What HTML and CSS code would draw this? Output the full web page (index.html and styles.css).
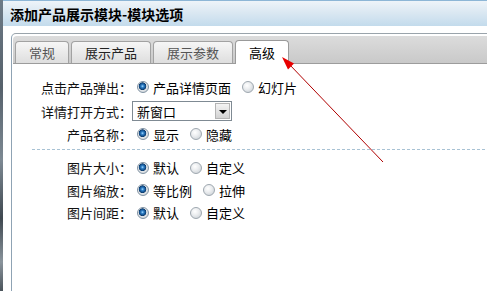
FILE: index.html
```html
<!DOCTYPE html>
<html lang="zh-CN">
<head>
<meta charset="utf-8">
<title>添加产品展示模块-模块选项</title>
<link rel="stylesheet" href="styles.css">
</head>
<body>
<div class="desk"></div>
<div class="win">
  <div class="titlebar"><h1 class="title">添加产品展示模块-模块选项</h1></div>
  <div class="panel">
    <div class="tabbar">
      <div class="tab">常规</div>
      <div class="tab tab-dark">展示产品</div>
      <div class="tab">展示参数</div>
      <div class="tab active">高级</div>
    </div>
    <div class="content">
      <div class="row r24">
        <span class="label">点击产品弹出：</span>
        <label class="opt"><input class="radio" type="radio" name="pop" checked>产品详情页面</label>
        <label class="opt"><input class="radio" type="radio" name="pop">幻灯片</label>
      </div>
      <div class="row r24">
        <span class="label">详情打开方式：</span>
        <div class="select"><span class="sel-text">新窗口</span><span class="sel-btn"><span class="tri"></span></span></div>
      </div>
      <div class="row r22">
        <span class="label">产品名称：</span>
        <label class="opt"><input class="radio" type="radio" name="nm" checked>显示</label>
        <label class="opt"><input class="radio" type="radio" name="nm">隐藏</label>
      </div>
      <div class="sep"></div>
      <div class="row r23">
        <span class="label">图片大小：</span>
        <label class="opt"><input class="radio" type="radio" name="sz" checked>默认</label>
        <label class="opt"><input class="radio" type="radio" name="sz">自定义</label>
      </div>
      <div class="row r22">
        <span class="label">图片缩放：</span>
        <label class="opt"><input class="radio" type="radio" name="sc" checked>等比例</label>
        <label class="opt"><input class="radio" type="radio" name="sc">拉伸</label>
      </div>
      <div class="row r23">
        <span class="label">图片间距：</span>
        <label class="opt"><input class="radio" type="radio" name="gp" checked>默认</label>
        <label class="opt"><input class="radio" type="radio" name="gp">自定义</label>
      </div>
    </div>
  </div>
</div>
<svg class="annot" width="487" height="291" viewBox="0 0 487 291">
  <line x1="383" y1="162" x2="289" y2="64" stroke="#b00000" stroke-width="1"/>
  <polygon points="282,57 288,69.5 294,63.5" fill="#e80000"/>
</svg>
</body>
</html>
```

FILE: styles.css
```css
html, body {
  margin: 0;
  padding: 0;
}
body {
  width: 487px;
  height: 291px;
  overflow: hidden;
  display: flex;
  position: relative;
  background: #fff;
  font-family: "Noto Sans CJK SC", "Noto Sans", sans-serif;
  font-size: 13px;
  color: #000;
}
.desk {
  width: 3px;
  flex: none;
  background: linear-gradient(#6d7a86 0, #56616b 30%, #7d8993 55%, #3f4850 75%, #8a949c 90%, #4b545b 100%);
}
.win {
  flex: 1;
  display: flex;
  flex-direction: column;
  background: #fff;
}
.titlebar {
  height: 25px;
  border-top: 1px solid #8db6d6;
  background: linear-gradient(#eef4f9, #dbe8f2 45%, #c3dbec);
  display: flex;
  align-items: center;
  padding-left: 7px;
}
.title {
  margin: 0;
  font-size: 14px;
  font-weight: bold;
  line-height: 1;
  color: #000;
}
.panel {
  flex: 1;
  margin: 7px 0 0 8px;
  border-top: 1px solid #9aa4ab;
  border-left: 1px solid #8fa3b4;
  border-top-left-radius: 5px;
  padding-top: 2px;
  display: flex;
  flex-direction: column;
}
.tabbar {
  box-sizing: border-box;
  height: 28px;
  margin-left: 1px;
  border-bottom: 1px solid #9c9c9c;
  border-top-left-radius: 4px;
  background: linear-gradient(#dcdcdc, #c9c9c9);
  display: flex;
  align-items: flex-end;
  gap: 2px;
  padding-left: 2px;
}
.tab {
  box-sizing: border-box;
  height: 22px;
  padding: 0 13px;
  border: 1px solid #a2a2a2;
  border-bottom: none;
  border-radius: 4px 4px 0 0;
  background: linear-gradient(#f6f6f6, #dedede);
  color: #555;
  display: flex;
  align-items: center;
  line-height: 1;
}
.tab-dark {
  color: #222;
}
.tab.active {
  height: 24px;
  margin-bottom: -1px;
  background: #fff;
  color: #000;
  border-color: #9a9a9a;
  position: relative;
}
.content {
  flex: 1;
  padding-top: 11px;
}
.row {
  display: flex;
  align-items: center;
}
.r24 { height: 24px; }
.r23 { height: 23px; }
.r22 { height: 22px; }
.label {
  width: 120px;
  text-align: right;
  color: #111;
  flex: none;
}
.opt {
  display: flex;
  align-items: center;
}
.opt + .opt {
  margin-left: 6px;
}
.radio {
  -webkit-appearance: none;
  appearance: none;
  box-sizing: border-box;
  width: 12px;
  height: 12px;
  margin: 0 4px 0 5px;
  border-radius: 50%;
  border: 1px solid #9ea7af;
  background: radial-gradient(circle at 40% 35%, #ffffff 0, #eceef0 40%, #c4cbd1 100%);
}
.radio:checked {
  border-color: #8193a3;
  background:
    radial-gradient(circle at 45% 42%, #a8dcff 0, #2f80c8 1.4px, #124d88 3px, #0b3868 3.6px, rgba(11,56,104,0) 4.1px),
    radial-gradient(circle at 40% 35%, #ffffff 0, #eceef0 40%, #c4cbd1 100%);
}
.select {
  box-sizing: border-box;
  width: 100px;
  height: 20px;
  border: 1px solid #7f8a93;
  display: flex;
  align-items: center;
  justify-content: space-between;
  padding: 1px;
  background: #fff;
}
.sel-text {
  padding-left: 3px;
}
.sel-btn {
  box-sizing: border-box;
  width: 15px;
  height: 16px;
  border: 1px solid #b4b4b4;
  background: linear-gradient(#f4f4f4, #d2d2d2);
  display: flex;
  align-items: center;
  justify-content: center;
}
.tri {
  width: 0;
  height: 0;
  border-left: 4px solid transparent;
  border-right: 4px solid transparent;
  border-top: 4px solid #000;
  margin-top: 1px;
}
.sep {
  height: 1px;
  margin: 4px 0 6px 20px;
  background: repeating-linear-gradient(90deg, #a8c2d4 0 3px, transparent 3px 5px);
}
.annot {
  position: absolute;
  left: 0;
  top: 0;
  pointer-events: none;
}
```
